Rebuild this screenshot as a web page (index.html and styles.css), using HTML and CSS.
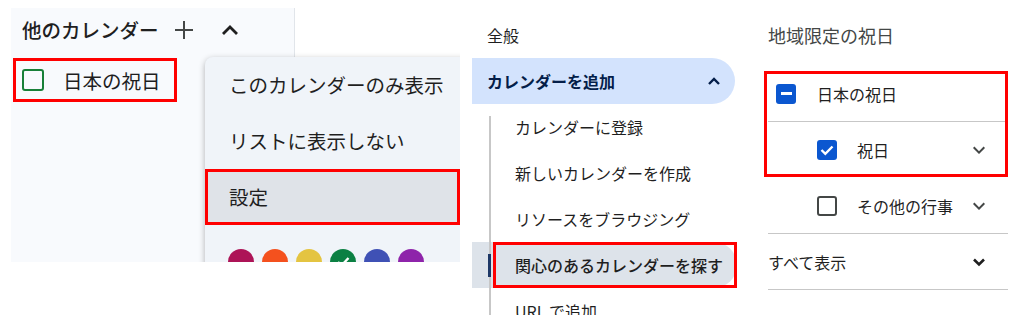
FILE: index.html
```html
<!DOCTYPE html>
<html lang="ja">
<head>
  <meta charset="UTF-8">
  <title>他のカレンダー 設定</title>
  <link rel="stylesheet" href="styles.css">
</head>
<body>
<div class="shot shot-side">
  <div class="sidebar">
    <div class="side-head">
      <span class="side-title">他のカレンダー</span>
      <svg class="ico-plus" width="20" height="20" viewBox="0 0 20 20"><path d="M10 1V19M1 10H19" stroke="#444746" stroke-width="2" fill="none"/></svg>
      <svg class="ico-up" width="18" height="12" viewBox="0 0 18 12"><polyline points="2,10 9,3 16,10" stroke="#1f1f1f" stroke-width="2.8" fill="none"/></svg>
    </div>
    <div class="side-item mark">
      <span class="box box-green"></span>
      <span>日本の祝日</span>
    </div>
  </div>

  <div class="menu">
    <div class="menu-item">このカレンダーのみ表示</div>
    <div class="menu-item">リストに表示しない</div>
    <div class="menu-item is-hover mark">設定</div>
    <div class="swatches">
      <span class="dot dot-1"></span>
      <span class="dot dot-2"></span>
      <span class="dot dot-3"></span>
      <span class="dot dot-4">
        <svg width="26" height="26" viewBox="0 0 26 26"><polyline points="8,13 11.5,16.5 18.5,9" stroke="#fff" stroke-width="2.4" fill="none"/></svg>
      </span>
      <span class="dot dot-5"></span>
      <span class="dot dot-6"></span>
    </div>
  </div>
</div>

<div class="shot shot-nav">
  <div class="nav-item">全般</div>
  <div class="nav-item is-open">
    <span>カレンダーを追加</span>
    <svg class="ico-caret" width="12" height="8" viewBox="0 0 12 8"><polyline points="1,7 6,2 11,7" stroke="#041e49" stroke-width="2.4" fill="none"/></svg>
  </div>
  <div class="sub-list">
    <div class="sub-item"><span class="bar"></span><span class="sub-label">カレンダーに登録</span></div>
    <div class="sub-item"><span class="bar"></span><span class="sub-label">新しいカレンダーを作成</span></div>
    <div class="sub-item"><span class="bar"></span><span class="sub-label">リソースをブラウジング</span></div>
    <div class="sub-item is-active"><span class="bar"></span><span class="sub-label mark">関心のあるカレンダーを探す</span></div>
    <div class="sub-item"><span class="bar"></span><span class="sub-label">URL で追加</span></div>
  </div>
</div>

<div class="shot shot-reg">
  <div class="reg-title">地域限定の祝日</div>
  <div class="reg-list">
    <div class="reg-group">
      <div class="reg-row">
        <span class="cb cb-mixed"><span class="dash"></span></span>
        <span>日本の祝日</span>
      </div>
      <div class="reg-row sub">
        <span class="cb cb-on">
          <svg width="20" height="20" viewBox="0 0 20 20"><polyline points="4.5,10 8.3,13.8 15.5,6.5" stroke="#fff" stroke-width="2.4" fill="none"/></svg>
        </span>
        <span>祝日</span>
        <svg class="ico-more" width="24" height="24" viewBox="0 0 24 24"><path d="M16.59 8.59L12 13.17 7.41 8.59 6 10l6 6 6-6z" fill="#444746"/></svg>
      </div>
    </div>
    <div class="reg-row sub">
      <span class="cb cb-off"></span>
      <span>その他の行事</span>
      <svg class="ico-more" width="24" height="24" viewBox="0 0 24 24"><path d="M16.59 8.59L12 13.17 7.41 8.59 6 10l6 6 6-6z" fill="#444746"/></svg>
    </div>
    <div class="reg-row">
      <span>すべて表示</span>
      <svg class="ico-more" width="24" height="24" viewBox="0 0 24 24"><polyline points="7,9.5 12,14.5 17,9.5" stroke="#1f1f1f" stroke-width="2.6" fill="none"/></svg>
    </div>
  </div>
</div>
</body>
</html>
```

FILE: styles.css
```css
* {
  box-sizing: border-box;
}
body {
  margin: 0;
  width: 1024px;
  height: 320px;
  background: #fff;
  display: flex;
  align-items: flex-start;
  font-family: "Noto Sans CJK JP", "Noto Sans", sans-serif;
  color: #1f1f1f;
  overflow: hidden;
}
.shot {
  flex: none;
  overflow: hidden;
}
.mark {
  outline: 3px solid #ff0000;
  outline-offset: -3px;
}

/* left: sidebar + menu */
.shot-side {
  position: relative;
  width: 460px;
  height: 262px;
}
.sidebar {
  margin: 8px 0 0 11px;
  width: 284px;
  height: 254px;
  background: #f8fafd;
  border-right: 1px solid #e1e5ea;
}
.side-head {
  height: 44px;
  display: flex;
  align-items: center;
  padding-left: 11px;
}
.side-title {
  font-size: 19.5px;
  font-weight: 500;
  line-height: 26px;
}
.ico-plus {
  margin-left: 15px;
}
.ico-up {
  margin-left: 27px;
}
.side-item {
  margin: 6px 0 0 2px;
  width: 164px;
  height: 44px;
  display: flex;
  align-items: center;
  padding-left: 9px;
  font-size: 19.5px;
}
.box {
  width: 22px;
  height: 22px;
  border-radius: 3px;
  margin-right: 19px;
}
.box-green {
  border: 2.5px solid #188038;
}
.menu {
  position: absolute;
  left: 205px;
  top: 57px;
  width: 270px;
  height: 240px;
  background: #f0f4f9;
  border-radius: 8px 0 0 0;
  box-shadow: 0 2px 6px rgba(0,0,0,0.3);
}
.menu-item {
  height: 56px;
  line-height: 56px;
  padding-left: 24px;
  font-size: 19.5px;
}
.menu-item.is-hover {
  width: 255px;
  background: #dfe3e8;
}
.swatches {
  display: flex;
  gap: 8px;
  padding: 24px 0 0 23px;
}
.dot {
  width: 26px;
  height: 26px;
  border-radius: 50%;
}
.dot svg {
  display: block;
}
.dot-1 { background: #ad1457; }
.dot-2 { background: #f4511e; }
.dot-3 { background: #e4c441; }
.dot-4 { background: #0b8043; }
.dot-5 { background: #3f51b5; }
.dot-6 { background: #8e24aa; }

/* middle: settings nav */
.shot-nav {
  width: 280px;
  height: 315px;
  padding: 12px 0 0 12px;
}
.nav-item {
  width: 263px;
  height: 46px;
  display: flex;
  align-items: center;
  justify-content: space-between;
  padding: 0 15px;
  font-size: 16px;
  border-radius: 0 23px 23px 0;
}
.nav-item.is-open {
  background: #d3e3fd;
  color: #041e49;
  font-weight: 700;
}
.sub-list {
  position: relative;
}
.sub-list::before {
  content: "";
  position: absolute;
  left: 17px;
  top: 12px;
  bottom: 0;
  width: 2px;
  background: #c7c7c7;
}
.sub-item {
  width: 265px;
  height: 46px;
  display: flex;
  align-items: center;
  padding-left: 16px;
  font-size: 16px;
  border-radius: 0 23px 23px 0;
}
.bar {
  position: relative;
  width: 3px;
  height: 23px;
}
.sub-label {
  flex: 1;
  height: 100%;
  display: flex;
  align-items: center;
  margin-left: 2px;
  padding-left: 22px;
}
.sub-item.is-active {
  background: #dde3ea;
  font-weight: 500;
}
.sub-item.is-active .bar {
  background: #1d3766;
}

/* right: regional holidays */
.shot-reg {
  width: 284px;
  padding: 22px 16px 0 28px;
}
.reg-title {
  font-size: 18px;
  line-height: 26px;
  color: #444746;
  margin-bottom: 18px;
}
.reg-group {
  position: relative;
}
.reg-group::after {
  content: "";
  position: absolute;
  top: 5px;
  left: -4px;
  right: 0;
  bottom: 1px;
  border: 3px solid #ff0000;
}
.reg-row {
  height: 56px;
  display: flex;
  align-items: center;
  border-bottom: 1px solid #c7c7c7;
  font-size: 16px;
}
.reg-row.sub {
  border-bottom: none;
  padding-left: 49px;
}
.reg-row.sub + .reg-row.sub,
.reg-list > .reg-row.sub {
  border-bottom: 1px solid #c7c7c7;
}
.reg-group .reg-row.sub {
  border-bottom: none;
}
.reg-row:first-child {
  padding-left: 8px;
}
.cb {
  width: 20px;
  height: 20px;
  border-radius: 3px;
  margin-right: 21px;
  flex: none;
}
.reg-row.sub .cb {
  margin-right: 20px;
}
.cb svg {
  display: block;
}
.cb-mixed {
  background: #0b57d0;
  display: flex;
  align-items: center;
  justify-content: center;
}
.dash {
  width: 11px;
  height: 2.5px;
  background: #fff;
}
.cb-on {
  background: #0b57d0;
}
.cb-off {
  border: 2.5px solid #444746;
}
.ico-more {
  margin-left: auto;
  margin-right: 17px;
}
```
